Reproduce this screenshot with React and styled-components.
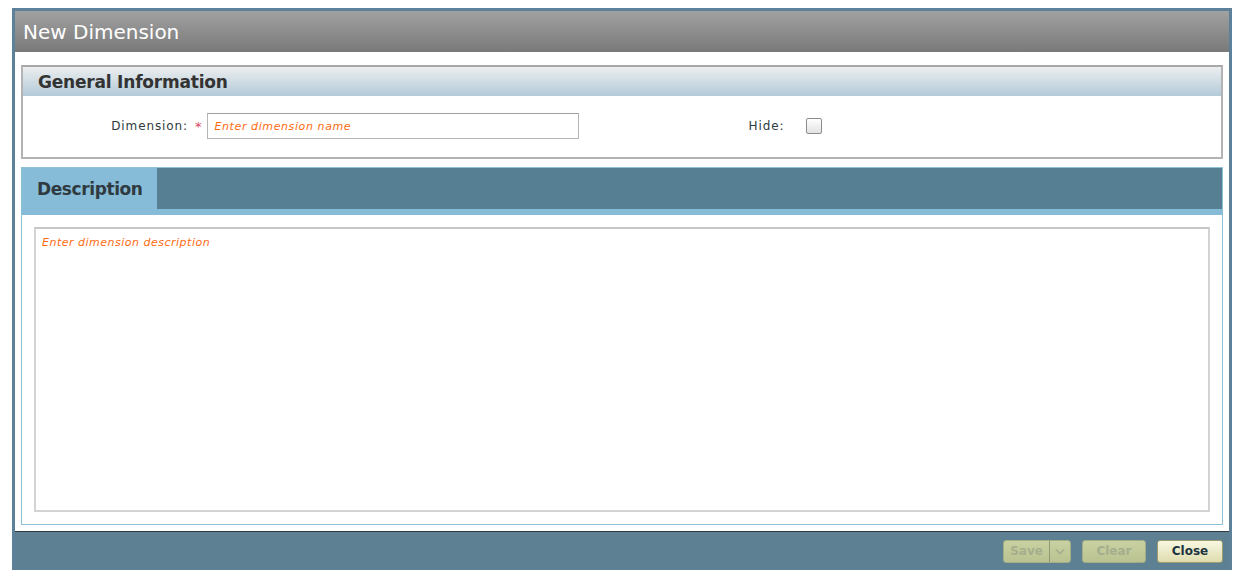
import React from "react";
import styled, { createGlobalStyle } from "styled-components";

const GlobalStyle = createGlobalStyle`
  html, body {
    margin: 0;
    padding: 0;
    background: #ffffff;
    font-family: "DejaVu Sans", Verdana, sans-serif;
  }
`;

const Page = styled.div`
  padding: 8px 0 0 12px;
`;

const Dialog = styled.div`
  width: 1220px;
  height: 562px;
  box-sizing: border-box;
  background: #5d8199;
  padding: 3px 3px 0 3px;
  display: flex;
  flex-direction: column;
`;

const TitleBar = styled.div`
  height: 41px;
  flex: none;
  background: linear-gradient(#a1a1a1, #797979);
  color: #ffffff;
  font-size: 20px;
  display: flex;
  align-items: center;
  padding-left: 8px;
`;

const Body = styled.div`
  flex: 1;
  background: #ffffff;
  padding: 13px 6px 6px 6px;
  display: flex;
  flex-direction: column;
  gap: 8px;
  border-bottom: 1px solid #2f3a40;
`;

const Section = styled.div`
  border: 2px solid #b3b3b3;
  border-top-color: #a8a8a8;
  height: 94px;
  box-sizing: border-box;
  display: flex;
  flex-direction: column;
`;

const SectionHead = styled.div`
  height: 29px;
  background: linear-gradient(#eceeef, #b3cad8);
  color: #333;
  font-size: 17px;
  font-weight: bold;
  letter-spacing: -0.2px;
  display: flex;
  align-items: center;
  padding-left: 15px;
`;

const FormRow = styled.div`
  display: flex;
  align-items: center;
  padding-top: 17px;
`;

const Label = styled.span`
  width: ${(p) => p.w}px;
  text-align: right;
  font-size: 12px;
  letter-spacing: 0.9px;
  color: #2d3b40;
  flex: none;
`;

const Star = styled.span`
  color: #dd4660;
  font-size: 13px;
  margin: 0 5px 0 7px;
`;

const TextInput = styled.div`
  width: 372px;
  height: 26px;
  box-sizing: border-box;
  border: 1px solid #b5b5b5;
  border-top-color: #a0a0a0;
  display: flex;
  align-items: center;
  padding-left: 7px;
  font-size: 11px;
  font-style: italic;
  letter-spacing: 0.6px;
  color: #ff6a10;
`;

const Check = styled.span`
  width: 16px;
  height: 16px;
  box-sizing: border-box;
  margin-left: 21px;
  border: 1px solid #8c8c8c;
  border-radius: 2px;
  background: linear-gradient(#ffffff, #e2e2e2);
  flex: none;
`;

const Panel = styled.div`
  flex: 1;
  border: 1px solid #8fc0da;
  display: flex;
  flex-direction: column;
`;

const TabBar = styled.div`
  height: 41px;
  background: #577f93;
  border-bottom: 6px solid #87bcd9;
  display: flex;
`;

const Tab = styled.div`
  width: 135px;
  background: #87bcd9;
  color: #2f3b40;
  font-size: 17px;
  font-weight: bold;
  letter-spacing: -0.4px;
  display: flex;
  align-items: center;
  padding-left: 15px;
  box-sizing: border-box;
`;

const PanelBody = styled.div`
  flex: 1;
  padding: 12px 12px 12px 12px;
  display: flex;
`;

const TextArea = styled.div`
  flex: 1;
  border: 2px solid #d3d3d3;
  border-top-color: #c6c6c6;
  padding: 7px 6px;
  font-size: 11px;
  font-style: italic;
  letter-spacing: 0.5px;
  color: #ff6a10;
`;

const Footer = styled.div`
  height: 38px;
  flex: none;
  background: #5e8093;
  display: flex;
  align-items: center;
  justify-content: flex-end;
  gap: 11px;
  padding-right: 6px;
`;

const Button = styled.div`
  height: 23px;
  box-sizing: border-box;
  width: ${(p) => p.w}px;
  border: 1px solid ${(p) => (p.disabled ? "#a3ad86" : "#9c9c70")};
  border-radius: 3px;
  background: ${(p) =>
    p.disabled
      ? "linear-gradient(#c9d1a2, #b9c290)"
      : "linear-gradient(#f8f8e2, #dedcad)"};
  color: ${(p) => (p.disabled ? "#a5ae8c" : "#1e3540")};
  font-size: 12px;
  font-weight: bold;
  display: flex;
  align-items: center;
  justify-content: center;
  overflow: hidden;
`;

const SplitMain = styled.span`
  flex: 1;
  text-align: center;
`;

const SplitArrow = styled.span`
  width: 20px;
  height: 100%;
  border-left: 1px solid #8f9878;
  display: flex;
  align-items: center;
  justify-content: center;
`;

export default function App() {
  return (
    <>
      <GlobalStyle />
      <Page>
        <Dialog>
          <TitleBar>New Dimension</TitleBar>
          <Body>
            <Section>
              <SectionHead>General Information</SectionHead>
              <FormRow>
                <Label w={165}>Dimension:</Label>
                <Star>*</Star>
                <TextInput>Enter dimension name</TextInput>
                <Label w={206}>Hide:</Label>
                <Check />
              </FormRow>
            </Section>
            <Panel>
              <TabBar>
                <Tab>Description</Tab>
              </TabBar>
              <PanelBody>
                <TextArea>Enter dimension description</TextArea>
              </PanelBody>
            </Panel>
          </Body>
          <Footer>
            <Button w={68} disabled>
              <SplitMain>Save</SplitMain>
              <SplitArrow>
                <svg width="10" height="7" viewBox="0 0 10 7">
                  <path d="M1 1.5 L5 5.5 L9 1.5" fill="none" stroke="#a5ae8c" strokeWidth="1.6" />
                </svg>
              </SplitArrow>
            </Button>
            <Button w={64} disabled>Clear</Button>
            <Button w={66}>Close</Button>
          </Footer>
        </Dialog>
      </Page>
    </>
  );
}
